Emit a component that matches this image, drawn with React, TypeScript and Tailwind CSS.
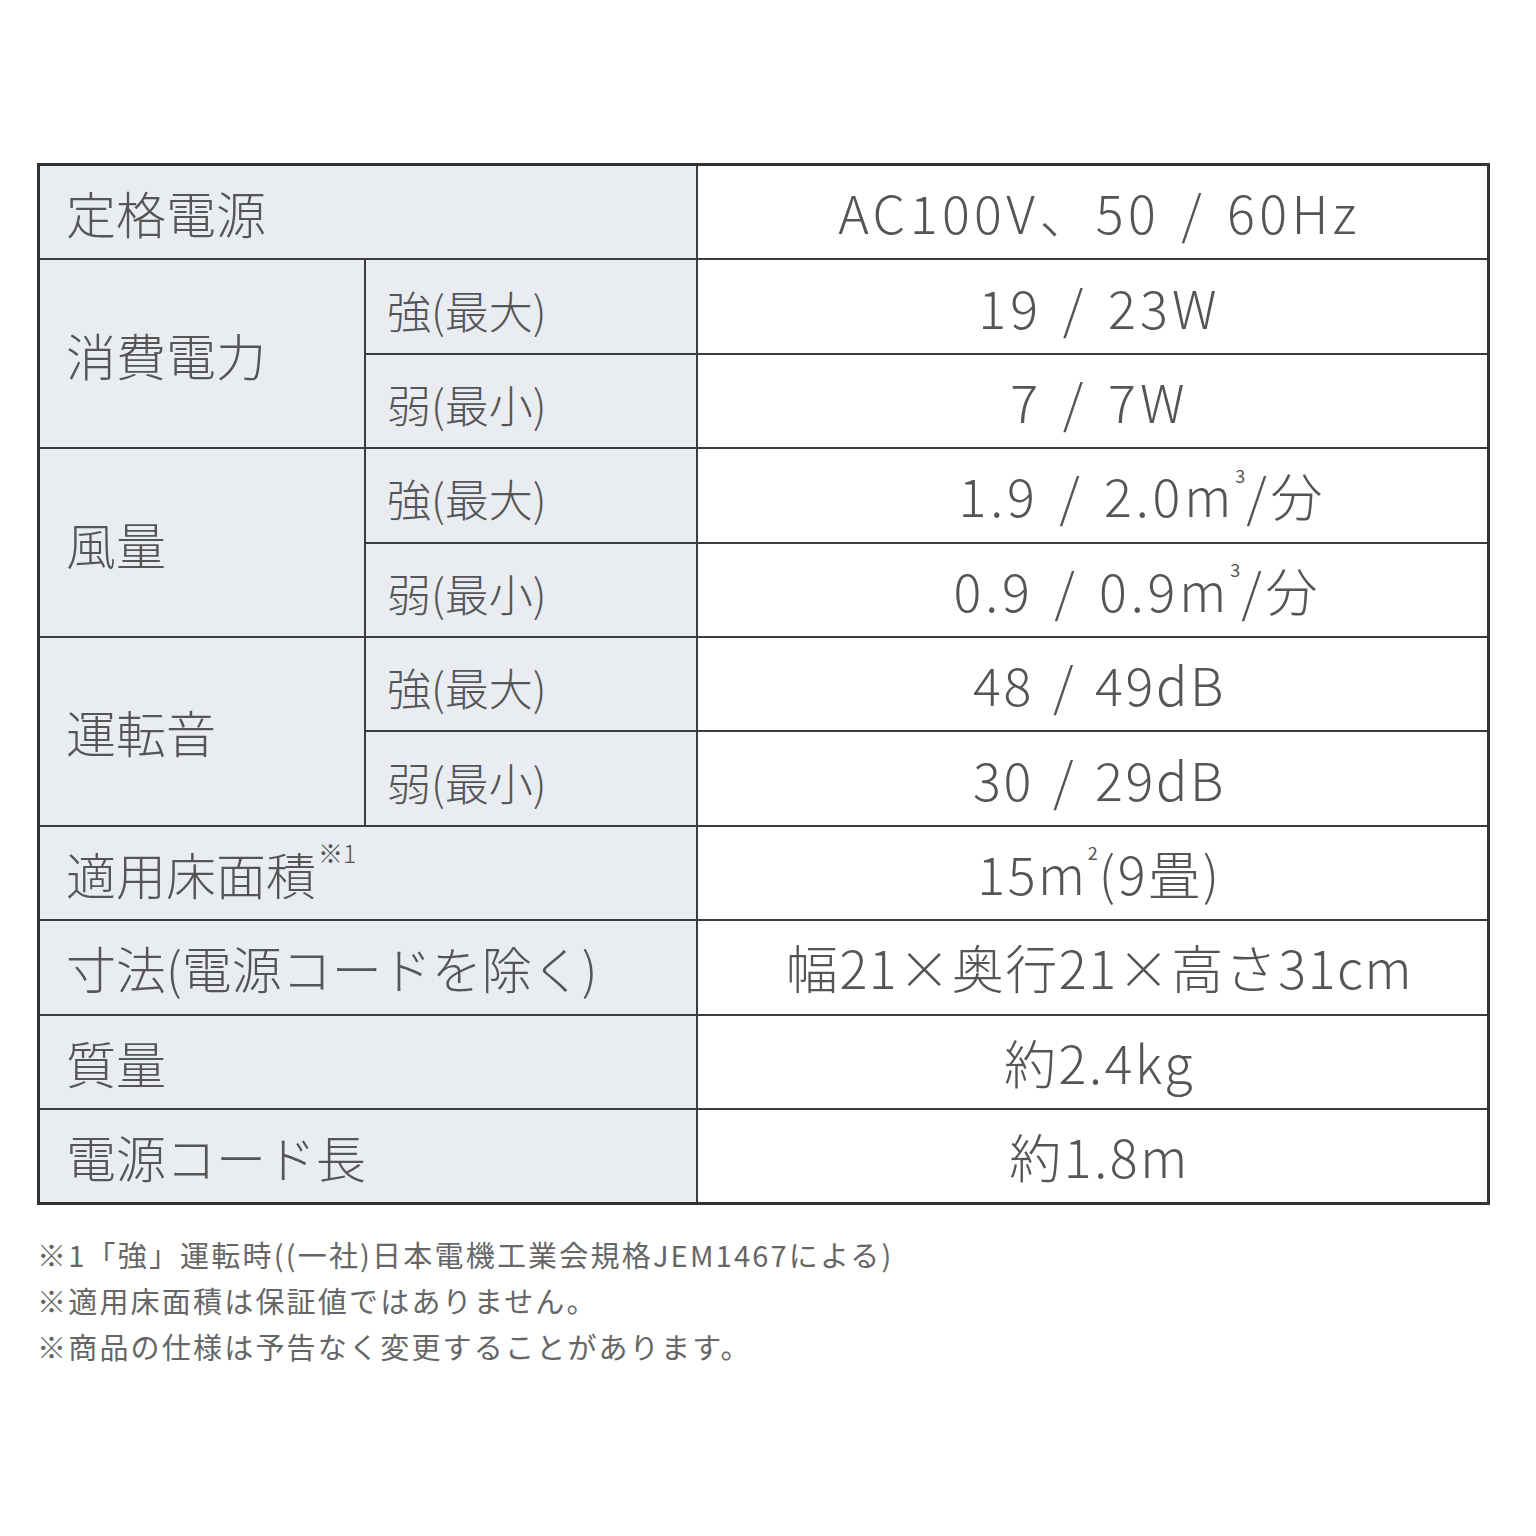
const FONT = "font-['Noto_Sans_CJK_JP','Noto_Sans',sans-serif]";

type Row =
  | { kind: 'single'; label: React.ReactNode; value: React.ReactNode; vcls?: string }
  | { kind: 'pair'; label: string; items: { sub: string; value: React.ReactNode; vcls?: string }[] };

const Sup = ({ n }: { n: string }) => (
  <sup className="text-[18px] font-normal -top-[1.15em] ml-0 mr-[1px] tracking-normal">{n}</sup>
);

const m3 = (v: string) => (
  <>
    {v}m<Sup n="3" />/分
  </>
);

const ROWS: Row[] = [
  { kind: 'single', label: '定格電源', value: 'AC100V、50 / 60Hz', vcls: 'tracking-[0.085em]' },
  {
    kind: 'pair',
    label: '消費電力',
    items: [
      { sub: '強(最大)', value: '19 / 23W', vcls: 'tracking-[0.08em]' },
      { sub: '弱(最小)', value: '7 / 7W', vcls: 'tracking-[0.08em]' },
    ],
  },
  {
    kind: 'pair',
    label: '風量',
    items: [
      { sub: '強(最大)', value: m3('1.9 / 2.0'), vcls: 'pl-[100px] tracking-[0.075em]' },
      { sub: '弱(最小)', value: m3('0.9 / 0.9'), vcls: 'pl-[90px] tracking-[0.075em]' },
    ],
  },
  {
    kind: 'pair',
    label: '運転音',
    items: [
      { sub: '強(最大)', value: '48 / 49dB' },
      { sub: '弱(最小)', value: '30 / 29dB' },
    ],
  },
  {
    kind: 'single',
    label: (
      <>
        適用床面積<sup className="text-[25px] -top-[0.85em] ml-[2px]">※1</sup>
      </>
    ),
    value: (
      <>
        15m<Sup n="2" />(9畳)
      </>
    ),
  },
  { kind: 'single', label: '寸法(電源コードを除く)', value: '幅21×奥行21×高さ31cm', vcls: 'tracking-[0.03em]' },
  { kind: 'single', label: '質量', value: '約2.4kg' },
  { kind: 'single', label: '電源コード長', value: '約1.8m' },
];

const labelCls = 'bg-[#e9edf1] flex items-center pl-[26px] text-[50px] text-[#555] leading-none font-light';
const subCls = 'bg-[#e9edf1] flex items-center pl-[21px] pt-[6px] text-[44px] text-[#555] leading-none font-light';
const valueCls =
  'bg-white flex items-center justify-center pl-[14px] text-[52px] text-[#555] leading-none font-light [word-spacing:5px]';

export default function App() {
  return (
    <div className={`${FONT} bg-white w-[1536px] h-[1536px] pt-[163px] pl-[37px]`}>
      <div className="w-[1453px] border-[3px] border-[#333] bg-[#3c3c3c] grid grid-cols-[324px_330px_1fr] auto-rows-[92.4px] gap-[2px]">
        {ROWS.map((r, i) =>
          r.kind === 'single' ? (
            <div key={i} className="contents">
              <div className={`${labelCls} col-span-2`}>{r.label}</div>
              <div className={`${valueCls} ${r.vcls ?? 'tracking-[0.05em]'}`}>{r.value}</div>
            </div>
          ) : (
            <div key={i} className="contents">
              <div className={`${labelCls} row-span-2`}>{r.label}</div>
              {r.items.map((it, j) => (
                <div key={j} className="contents">
                  <div className={subCls}>{it.sub}</div>
                  <div className={`${valueCls} ${it.vcls ?? 'tracking-[0.05em]'}`}>{it.value}</div>
                </div>
              ))}
            </div>
          ),
        )}
      </div>
      <div className="mt-[26px] text-[29px] leading-[46px] text-[#666] tracking-[2.2px]">
        <p>※1「強」運転時((一社)日本電機工業会規格JEM1467による)</p>
        <p>※適用床面積は保証値ではありません。</p>
        <p>※商品の仕様は予告なく変更することがあります。</p>
      </div>
    </div>
  );
}
